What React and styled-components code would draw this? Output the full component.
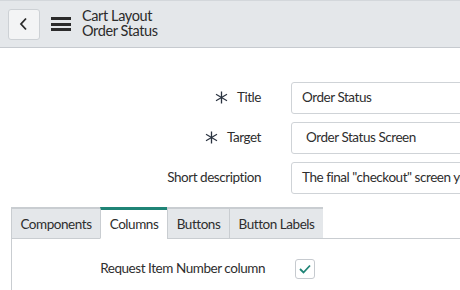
import styled, { createGlobalStyle } from "styled-components";

const GlobalStyle = createGlobalStyle`
  html, body {
    margin: 0;
    padding: 0;
    background: #ffffff;
    overflow: hidden;
  }
  body {
    font-family: "Lato", "Liberation Sans", sans-serif;
    font-size: 13.5px;
    letter-spacing: -0.45px;
    color: #2e2e2e;
  }
`;

const Page = styled.div`
  width: 460px;
  height: 290px;
  overflow: hidden;
`;

const Header = styled.header`
  display: flex;
  align-items: center;
  height: 46px;
  padding-left: 8px;
  background: #e4e7ea;
  border-top: 1px solid #d3d7db;
  border-bottom: 1px solid #c6cacf;
`;

const BackButton = styled.button`
  display: flex;
  align-items: center;
  justify-content: center;
  width: 32px;
  height: 31px;
  padding: 0;
  background: #f3f4f5;
  border: 1px solid #cdd1d5;
  border-radius: 3px;
  color: #2e2e2e;
`;

const Burger = styled.div`
  display: flex;
  flex-direction: column;
  justify-content: space-between;
  width: 20px;
  height: 14px;
  margin: 0 11px 0 11px;
  & span {
    display: block;
    height: 3px;
    background: #2b2b2b;
  }
`;

const Titles = styled.div`
  display: flex;
  flex-direction: column;
  font-size: 14.5px;
  letter-spacing: -0.4px;
  line-height: 15px;
  color: #2b2b2b;
  margin-top: -3px;
`;

const Main = styled.main`
  padding: 34px 0 0 11px;
`;

const Form = styled.div`
  display: grid;
  grid-template-columns: 250px 300px;
  column-gap: 30px;
  row-gap: 8px;
`;

const Label = styled.label`
  box-sizing: border-box;
  display: flex;
  align-items: center;
  justify-content: flex-end;
  gap: 9px;
  height: 32px;
  padding-bottom: 2px;
  color: #2e2e2e;
`;

const Input = styled.div`
  box-sizing: border-box;
  height: 32px;
  display: flex;
  align-items: center;
  padding-left: ${(p) => (p.$indent ? "14px" : "10px")};
  padding-bottom: 2px;
  border: 1px solid #cfd3d7;
  border-radius: 3px;
  color: #2e2e2e;
  white-space: nowrap;
`;

const Tabs = styled.div`
  display: flex;
  margin-top: 13px;
  height: 32px;
  box-sizing: border-box;
`;

const Tab = styled.div`
  box-sizing: border-box;
  display: flex;
  align-items: center;
  justify-content: center;
  width: ${(p) => p.$w}px;
  height: 32px;
  color: #2e2e2e;
  background: ${(p) => (p.$active ? "#ffffff" : "#e4e7ea")};
  border-top: ${(p) => (p.$active ? "3px solid #1f8476" : "2px solid #c9cdd1")};
  border-left: 1px solid #c9cdd1;
  border-bottom: ${(p) => (p.$active ? "1px solid transparent" : "1px solid #c9cdd1")};
  &:last-of-type {
    border-right: 1px solid #c9cdd1;
  }
`;

const TabFill = styled.div`
  flex: 1;
  border-bottom: 1px solid #c9cdd1;
`;

const Panel = styled.div`
  border-left: 1px solid #c9cdd1;
  padding-top: 20px;
  height: 60px;
`;

const CheckRow = styled.div`
  display: grid;
  grid-template-columns: 253px 20px;
  column-gap: 30px;
  align-items: center;
`;

const CheckLabel = styled.span`
  text-align: right;
  margin-top: -2px;
  color: #2e2e2e;
`;

const CheckBox = styled.div`
  box-sizing: border-box;
  width: 20px;
  height: 20px;
  display: flex;
  align-items: center;
  justify-content: center;
  border: 1px solid #c6cacf;
  border-radius: 3px;
  background: #ffffff;
`;

function Mandatory() {
  return (
    <svg width="13" height="13" viewBox="0 0 13 13" fill="none" stroke="#2a3340" strokeWidth="1.3">
      <line x1="6.5" y1="0.5" x2="6.5" y2="12.5" />
      <line x1="1" y1="3.3" x2="12" y2="9.7" />
      <line x1="1" y1="9.7" x2="12" y2="3.3" />
    </svg>
  );
}

export default function App() {
  const tabs = [
    { name: "Components", w: 89 },
    { name: "Columns", w: 67, active: true },
    { name: "Buttons", w: 62 },
    { name: "Button Labels", w: 94 },
  ];

  return (
    <Page>
      <GlobalStyle />
      <Header>
        <BackButton>
          <svg width="10" height="14" viewBox="0 0 10 14" fill="none" stroke="#2b2b2b" strokeWidth="1.8">
            <polyline points="7,1.5 2,7 7,12.5" />
          </svg>
        </BackButton>
        <Burger>
          <span />
          <span />
          <span />
        </Burger>
        <Titles>
          <span>Cart Layout</span>
          <span>Order Status</span>
        </Titles>
      </Header>
      <Main>
        <Form>
          <Label>
            <Mandatory />
            Title
          </Label>
          <Input>Order Status</Input>
          <Label>
            <Mandatory />
            Target
          </Label>
          <Input $indent>Order Status Screen</Input>
          <Label>Short description</Label>
          <Input>The final "checkout" screen you see</Input>
        </Form>
        <Tabs>
          {tabs.map((t) => (
            <Tab key={t.name} $w={t.w} $active={t.active}>
              {t.name}
            </Tab>
          ))}
          <TabFill />
        </Tabs>
        <Panel>
          <CheckRow>
            <CheckLabel>Request Item Number column</CheckLabel>
            <CheckBox>
              <svg width="12" height="10" viewBox="0 0 12 10" fill="none" stroke="#1f8476" strokeWidth="1.8">
                <polyline points="1,5 4.5,8.5 11,1.5" />
              </svg>
            </CheckBox>
          </CheckRow>
        </Panel>
      </Main>
    </Page>
  );
}
